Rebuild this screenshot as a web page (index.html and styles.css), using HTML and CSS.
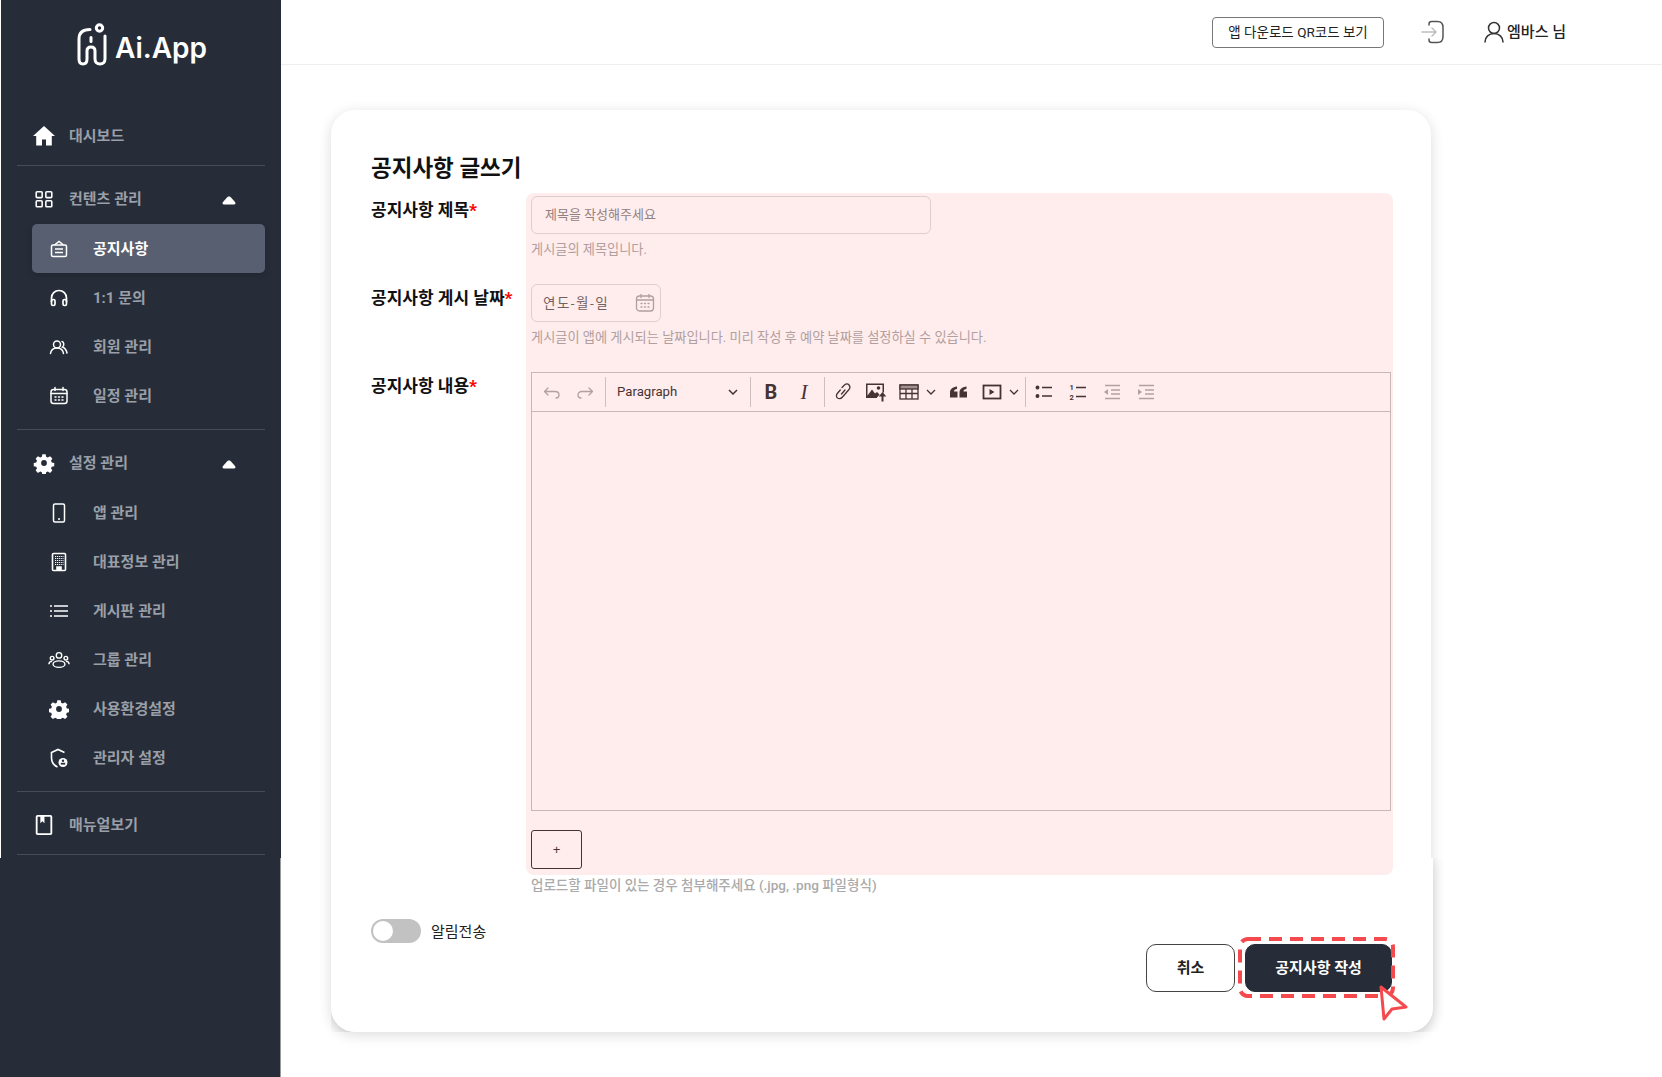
FILE: index.html
```html
<!DOCTYPE html>
<html lang="ko">
<head>
    <meta charset="UTF-8">
    <title>공지사항 글쓰기</title>
    <link rel="stylesheet" href="styles.css">
</head>
<body>
    <aside class="sidebar">
        <div class="sidebar-inner">
            <div class="logo">
                <svg width="30" height="44" viewBox="0 0 30 44" fill="none" stroke="#fff" stroke-width="3" stroke-linecap="round" stroke-linejoin="round">
                    <circle cx="22.500" cy="5" r="3.200"/>
                    <path d="M13 6.500C5 6.500 2 10 2 16V36C2 39 3.500 41 6 41S10 39 10 36V28C10 25 11.500 24 14 24S18 25 18 28V36C18 39 20 41 23 41S28 39 28 36V13"/>
                    <path d="M14 14.500V18.500"/>
                </svg>
                <span class="logo-text">Ai.App</span>
            </div>

            <a class="menu-top">
                <svg class="icon-top" viewBox="1 1.500 22 22" fill="#fff"><path d="M12 2.500 1 12.500h3.200V22h5.800v-6h4v6h5.800v-9.500H23z"/></svg>
                대시보드
            </a>
            <div class="line"></div>

            <a class="menu-top menu-group">
                <svg class="icon-top" viewBox="0 0 24 24" fill="none" stroke="#fff" stroke-width="1.700"><rect x="3.500" y="4" width="6.500" height="6.500" rx="1"/><rect x="14" y="4" width="6.500" height="6.500" rx="1"/><rect x="3.500" y="14" width="6.500" height="6.500" rx="1"/><rect x="14" y="14" width="6.500" height="6.500" rx="1"/></svg>
                컨텐츠 관리
                <svg class="caret" width="14" height="9" viewBox="0 0 14 9" fill="#fff"><path d="M7 .5C6 .5 5.500 1 5 1.600L1 6C0 7.200.6 8.500 2 8.500H12C13.400 8.500 14 7.200 13 6L9 1.600C8.500 1 8 .5 7 .5z"/></svg>
            </a>
            <a class="menu-sub active">
                <svg class="icon-sub" viewBox="0 0 20 20" fill="none" stroke="#fff" stroke-width="1.500"><rect x="2.500" y="6" width="15" height="11.500" rx="1.500"/><path d="M5.500 6 10 2.500 14.500 6M6 10h8M6 13.500h8"/></svg>
                공지사항
            </a>
            <a class="menu-sub">
                <svg class="icon-sub" viewBox="0 0 20 20" fill="none" stroke="#fff" stroke-width="1.700"><path d="M2.500 14V10a7.500 7.500 0 0 1 15 0v4"/><rect x="2.500" y="11.500" width="3.500" height="6" rx="1.500"/><rect x="14" y="11.500" width="3.500" height="6" rx="1.500"/></svg>
                1:1 문의
            </a>
            <a class="menu-sub">
                <svg class="icon-sub" viewBox="0 0 20 20" fill="none" stroke="#fff" stroke-width="1.500" stroke-linecap="round"><circle cx="8" cy="7.500" r="3.500"/><path d="M1.500 16.500c.5-3.500 3-5.500 6.500-5.500s6 2 6.500 5.500M13 4.500c2 .5 2.500 4 .5 5.500 2.500 1 4 3.500 4.500 6"/></svg>
                회원 관리
            </a>
            <a class="menu-sub">
                <svg class="icon-sub" viewBox="0 0 20 20" fill="none" stroke="#fff" stroke-width="1.500" stroke-linecap="round"><rect x="2" y="3.500" width="16" height="14" rx="2.500"/><path d="M2 7.500h16M6 1.500v3M14 1.500v3M6 11h1M9.500 11h1M13 11h1M6 14h1M9.500 14h1M13 14h1"/></svg>
                일정 관리
            </a>
            <div class="line line-group"></div>

            <a class="menu-top menu-group">
                <svg class="icon-top" viewBox="0 0 24 24" fill="#fff"><path fill-rule="evenodd" d="M10 1.500h4l.6 3 2 .9 2.700-1.600 2.800 2.800-1.600 2.700.9 2 3 .6v4l-3 .6-.9 2 1.600 2.700-2.800 2.800-2.700-1.600-2 .9-.6 3h-4l-.6-3-2-.9-2.700 1.600-2.800-2.800 1.600-2.700-.9-2-3-.6v-4l3-.6.9-2L1.900 6.600 4.700 3.800l2.700 1.600 2-.9zM12 8.500a3.500 3.500 0 1 0 0 7 3.500 3.500 0 0 0 0-7z" transform="translate(1.200 1.200) scale(.9)"/></svg>
                설정 관리
                <svg class="caret" width="14" height="9" viewBox="0 0 14 9" fill="#fff"><path d="M7 .5C6 .5 5.500 1 5 1.600L1 6C0 7.200.6 8.500 2 8.500H12C13.400 8.500 14 7.200 13 6L9 1.600C8.500 1 8 .5 7 .5z"/></svg>
            </a>
            <a class="menu-sub">
                <svg class="icon-sub" viewBox="0 0 20 20" fill="none" stroke="#fff" stroke-width="1.500"><rect x="4.500" y="1" width="11" height="18" rx="1.500"/><path d="M9 16h2"/></svg>
                앱 관리
            </a>
            <a class="menu-sub">
                <svg class="icon-sub" viewBox="0 0 20 20" fill="none" stroke="#fff" stroke-width="1.600"><rect x="3.500" y="1.500" width="13" height="17" rx="1"/><path stroke-dasharray="1.100 .8" stroke-width="1.100" d="M6 4.500h8.500M6 6.500h8.500M6 8.500h8.500M6 10.500h8.500M6 12.500h8.500"/><path fill="#fff" d="M8 18.500v-3.500h4v3.500"/></svg>
                대표정보 관리
            </a>
            <a class="menu-sub">
                <svg class="icon-sub" viewBox="0 0 20 20" fill="none" stroke="#fff" stroke-width="1.500"><path d="M5 5h14M5 10h14M5 15h14M1 5h2M1 10h2M1 15h2"/></svg>
                게시판 관리
            </a>
            <a class="menu-sub">
                <svg class="icon-sub icon-wide" viewBox="0 0 24 20" fill="none" stroke="#fff" stroke-width="1.500"><circle cx="12" cy="5" r="3"/><circle cx="4.500" cy="8" r="2"/><circle cx="19.500" cy="8" r="2"/><path d="M1 14.500c0-2 2-3 3.500-3M23 14.500c0-2-2-3-3.500-3"/><ellipse cx="12" cy="14.500" rx="6.500" ry="3.500"/></svg>
                그룹 관리
            </a>
            <a class="menu-sub">
                <svg class="icon-sub" viewBox="0 0 24 24" fill="#fff"><path fill-rule="evenodd" d="M10 1.500h4l.6 3 2 .9 2.700-1.600 2.800 2.800-1.600 2.700.9 2 3 .6v4l-3 .6-.9 2 1.600 2.700-2.800 2.800-2.700-1.600-2 .9-.6 3h-4l-.6-3-2-.9-2.700 1.600-2.800-2.800 1.600-2.700-.9-2-3-.6v-4l3-.6.9-2L1.900 6.600 4.700 3.800l2.700 1.600 2-.9zM12 8.500a3.500 3.500 0 1 0 0 7 3.500 3.500 0 0 0 0-7z"/></svg>
                사용환경설정
            </a>
            <a class="menu-sub">
                <svg class="icon-sub" viewBox="0 0 20 20" fill="none" stroke="#fff" stroke-width="1.600"><path d="M15.500 4.500 9 1.500 2.500 4.500V10c0 4 2.500 7.500 6 9"/><circle cx="14" cy="14.500" r="4.500" fill="#fff" stroke="none"/><circle cx="14" cy="12.800" r="1.200" fill="#262d38" stroke="none"/><rect x="11.800" y="14.800" width="4.400" height="1.800" fill="#262d38" stroke="none"/></svg>
                관리자 설정
            </a>
            <div class="line line-group"></div>

            <a class="menu-top">
                <svg class="icon-top" viewBox="0 0 24 24" fill="none" stroke="#fff" stroke-width="2"><rect x="4" y="2" width="16" height="20" rx="1"/><path fill="#fff" stroke="none" d="M8 2h4.500v8L10.200 8 8 10z"/></svg>
                매뉴얼보기
            </a>
            <div class="line line-last"></div>
        </div>
        <div class="sidebar-rest"></div>
    </aside>

    <div class="main">
        <header class="topbar">
            <button class="qr-btn">앱 다운로드 QR코드 보기</button>
            <svg class="logout" width="24" height="24" viewBox="0 0 24 24" fill="none" stroke-width="1.500" stroke-linecap="round" stroke-linejoin="round"><path stroke="#bdbdbd" d="M1 12h14M11 8l4 4-4 4"/><path stroke="#555" d="M8 5V4c0-1.500 1-2.500 2.500-2.500h6C20 1.500 22 4 22 7.500v9c0 3.500-2 6-5.500 6h-6C9 22.500 8 21.500 8 20v-1"/></svg>
            <div class="user">
                <svg width="20" height="22" viewBox="0 0 20 22" fill="none" stroke="#333" stroke-width="1.500" stroke-linecap="round"><circle cx="10" cy="7" r="5.500"/><path d="M1 21c0-5 4-8.500 9-8.500s9 3.500 9 8.500"/></svg>
                <span>엠바스 님</span>
            </div>
        </header>

        <section class="card">
            <h1 class="title">공지사항 글쓰기</h1>

            <div class="form-row">
                <label class="label">공지사항 제목<b>*</b></label>
                <div class="field">
                    <div class="input input-title">제목을 작성해주세요</div>
                    <p class="help">게시글의 제목입니다.</p>
                </div>
            </div>

            <div class="form-row">
                <label class="label">공지사항 게시 날짜<b>*</b></label>
                <div class="field">
                    <div class="input input-date">
                        연도-월-일
                        <svg width="20" height="20" viewBox="0 0 20 20" fill="none" stroke="#aaa" stroke-width="1.300" stroke-linecap="round"><rect x="1.500" y="3" width="17" height="15" rx="3"/><path d="M1.500 7h17M6 1.500v3M14 1.500v3M6 10.500h1M9.500 10.500h1M13 10.500h1M6 14h1M9.500 14h1M13 14h1"/></svg>
                    </div>
                    <p class="help">게시글이 앱에 게시되는 날짜입니다. 미리 작성 후 예약 날짜를 설정하실 수 있습니다.</p>
                </div>
            </div>

            <div class="form-row">
                <label class="label">공지사항 내용<b>*</b></label>
                <div class="field field-auto">
                    <div class="editor">
                        <div class="toolbar">
                            <svg class="tool tool-off" viewBox="0 0 20 20" fill="none" stroke="#333" stroke-width="1.300" stroke-linecap="round" stroke-linejoin="round"><path d="M6 6 2.500 9.500 6 13M3 9.500h10c2.500 0 4 1.500 4 3.500s-1.500 3-3 3"/></svg>
                            <svg class="tool tool-off" viewBox="0 0 20 20" fill="none" stroke="#333" stroke-width="1.300" stroke-linecap="round" stroke-linejoin="round"><path d="M14 6l3.500 3.500L14 13M17 9.500H7c-2.500 0-4 1.500-4 3.500s1.500 3 3 3"/></svg>
                            <i class="sep"></i>
                            <div class="select"><span class="select-text">Paragraph</span>
                                <svg width="10" height="6" viewBox="0 0 10 6" fill="none" stroke="#333" stroke-width="1.500"><path d="M1 1l4 4 4-4"/></svg>
                            </div>
                            <i class="sep"></i>
                            <span class="tool tool-b">B</span>
                            <span class="tool tool-i">I</span>
                            <i class="sep"></i>
                            <svg class="tool tool-link" viewBox="0 0 20 20" fill="none" stroke="#333" stroke-width="1.300" stroke-linecap="round"><path d="M9 5.500l2.500-2.500c1.500-1.200 3.500-1.200 4.500 0s1.200 3 0 4.500l-6.500 7.500c-1.500 1.700-3.500 2-5 1-1.200-1-1.500-3-.2-4.500l3-3.500M12 8l-3.500 4"/></svg>
                            <svg class="tool tool-wide tool-img" viewBox="0 0 22 20" fill="#333"><path fill-rule="evenodd" d="M1 1.500h18v9h-1.500V3h-15v10.500H12V16H1z"/><path d="M2.500 15v-1.500L7 7.500l3 4 2-1.500 2.500 2.500-2 2.500z"/><circle cx="13.500" cy="6" r="1.800"/><path d="M17.500 10l3.800 4.500h-2.800V19.500h-2v-5h-2.800z"/></svg>
                            <svg class="tool tool-wide" viewBox="0 0 20 20" fill="none" stroke="#333" stroke-width="1.300"><rect x="1" y="3" width="18" height="14"/><rect x="1" y="3" width="18" height="4" fill="#999"/><path d="M1 11.500h18M7 7v10M13 7v10"/></svg>
                            <svg class="chev" width="10" height="6" viewBox="0 0 10 6" fill="none" stroke="#333" stroke-width="1.300"><path d="M1 1l4 4 4-4"/></svg>
                            <svg class="tool" viewBox="0 0 20 20" fill="#333"><path d="M2 15.500V10.500C2 7 4.500 5 9 4.500V7C7 7.300 6 8.200 6 9.500H9.500V15.500zM11.500 15.500V10.500C11.500 7 14 5 18.500 4.500V7C16.500 7.300 15.500 8.200 15.500 9.500H19V15.500z"/></svg>
                            <svg class="tool tool-wide" viewBox="0 0 20 20" fill="none" stroke="#333" stroke-width="1.800"><rect x="1.500" y="3.500" width="17" height="13"/><path fill="#333" stroke="none" d="M7.500 7v6l5-3z"/></svg>
                            <svg class="chev" width="10" height="6" viewBox="0 0 10 6" fill="none" stroke="#333" stroke-width="1.300"><path d="M1 1l4 4 4-4"/></svg>
                            <i class="sep sep-last"></i>
                            <svg class="tool list-tool list-first" viewBox="0 0 20 20" fill="none" stroke="#333" stroke-width="1.300"><circle cx="3.500" cy="5.500" r="1.300" fill="#333"/><circle cx="3.500" cy="14" r="1.300" fill="#333"/><path d="M8 5.500h10M8 14h10"/></svg>
                            <svg class="tool list-tool" viewBox="0 0 20 20" fill="none" stroke="#333" stroke-width="1.300"><text x="1.500" y="8" font-size="7.500" font-weight="700" fill="#333" stroke="none">1</text><text x="1.500" y="18" font-size="7.500" font-weight="700" fill="#333" stroke="none">2</text><path d="M8 5.500h10M8 14.500h10"/></svg>
                            <svg class="tool list-tool tool-off" viewBox="0 0 20 20" fill="none" stroke="#333" stroke-width="1.300"><path d="M3 3.500h15M9 8h9M9 12h9M3 16.500h15"/><path fill="#333" stroke="none" d="M6 7v6l-4-3z"/></svg>
                            <svg class="tool list-tool tool-off" viewBox="0 0 20 20" fill="none" stroke="#333" stroke-width="1.300"><path d="M3 3.500h15M9 8h9M9 12h9M3 16.500h15"/><path fill="#333" stroke="none" d="M2 7v6l4-3z"/></svg>
                        </div>
                        <div class="editor-body"></div>
                    </div>
                    <button class="plus-btn">+</button>
                    <p class="help help-upload">업로드할 파일이 있는 경우 첨부해주세요 (.jpg, .png 파일형식)</p>
                </div>
            </div>

            <div class="notify">
                <span class="switch"><i></i></span>
                <span class="notify-text">알림전송</span>
            </div>

            <div class="actions">
                <button class="btn">취소</button>
                <button class="btn btn-dark">공지사항 작성</button>
            </div>

            <div class="highlight"></div>
            <svg class="dash" width="158" height="61" viewBox="0 0 158 61" fill="none" stroke="#f44a4e" stroke-width="4"><rect x="2" y="2" width="153" height="57" rx="8" stroke-dasharray="13 8"/></svg>
            <svg class="pointer" width="36" height="42" viewBox="0 0 36 42" fill="#fff" stroke="#f44a4e" stroke-width="3" stroke-linejoin="round"><path d="M5 5 30 25 16 27 8 37z"/></svg>
        </section>
    </div>
</body>
</html>
```

FILE: styles.css
```css
*{
    box-sizing: border-box;
}

html,body{
    margin: 0;
    padding: 0;
    height: 100%;
}

body{
    display: flex;
    font-family: Roboto, "Noto Sans CJK KR", sans-serif;
    background-color: #fff;
    overflow: hidden;
    color: #222;
}

p,h1{
    margin: 0;
}

/* sidebar */
.sidebar{
    display: flex;
    flex-direction: column;
    width: 281px;
    flex-shrink: 0;
    background-color: #262d38;
}

.sidebar-inner{
    height: 858px;
    border-left: 1px solid #fff;
    padding: 22px 16px 0;
}

.sidebar-rest{
    flex: 1;
    border-right: 1px solid #9a9a9a;
}

.logo{
    display: flex;
    align-items: center;
    gap: 8px;
    height: 46px;
    padding-left: 60px;
    margin-bottom: 43px;
}

.logo-text{
    font-family: Inter, sans-serif;
    font-weight: 600;
    font-size: 28px;
    padding-top: 6px;
    color: #fff;
}

.menu-top{
    display: flex;
    align-items: center;
    height: 49px;
    padding: 0 0 2px 16px;
    color: #9a9fa8;
    font-size: 15px;
    font-weight: 700;
}

.icon-top{
    width: 22px;
    height: 22px;
    margin-top: 2px;
    margin-right: 14px;
}

.menu-group{
    margin-bottom: 1px;
}

.caret{
    margin-left: auto;
    margin-right: 29px;
    margin-top: 6px;
}

.menu-sub{
    display: flex;
    align-items: center;
    height: 49px;
    margin-left: 15px;
    padding: 0 0 2px 17px;
    color: #9a9fa8;
    font-size: 15px;
    font-weight: 700;
}

.menu-sub.active{
    color: #fff;
    background-color: #585f71;
    border-radius: 5px;
    box-shadow: 0 2px 6px rgba(0,0,0,.15);
}

.icon-sub{
    width: 20px;
    height: 20px;
    margin-top: 2px;
    margin-right: 24px;
    flex-shrink: 0;
}

.icon-wide{
    width: 22px;
    height: 22px;
    margin-left: -1px;
    margin-right: 23px;
}

.line{
    height: 1px;
    margin: 5px 0 8px;
    background-color: #464c58;
}

.line-group{
    margin-top: 9px;
}

.line-last{
    margin-bottom: 0;
}

/* top */
.main{
    flex: 1;
    min-width: 0;
}

.topbar{
    display: flex;
    align-items: center;
    justify-content: flex-end;
    height: 65px;
    padding-right: 96px;
    border-bottom: 1px solid #eee;
}

.qr-btn{
    width: 172px;
    height: 31px;
    background-color: #fff;
    border: 1px solid #777;
    border-radius: 4px;
    font-family: inherit;
    font-size: 13.500px;
    color: #222;
    padding: 0 0 2px;
}

.logout{
    margin-left: 37px;
    margin-right: 39px;
}

.user{
    display: flex;
    align-items: center;
    gap: 3px;
    font-size: 15px;
    font-weight: 500;
    color: #222;
}

.user span{
    padding-bottom: 4px;
}

/* card */
.card{
    position: relative;
    z-index: 0;
    width: 1100px;
    height: 922px;
    margin: 45px 0 0 50px;
    padding: 46px 40px 0;
    background-color: #fff;
    border-radius: 24px;
    box-shadow: 0 3px 14px rgba(0,0,0,.14);
}

/* lower part of the card sits 2px wider */
.card::before{
    content: "";
    position: absolute;
    z-index: -1;
    left: 0;
    top: 748px;
    width: 1102px;
    bottom: 0;
    background-color: #fff;
    border-radius: 0 0 24px 24px;
    box-shadow: 0 3px 14px rgba(0,0,0,.14);
    clip-path: inset(0 -20px 0 0);
}

.title{
    font-size: 22.500px;
    font-weight: 700;
    line-height: 24px;
    color: #111;
    margin-bottom: 16px;
}

.form-row{
    display: flex;
}

.label{
    width: 160px;
    flex-shrink: 0;
    padding-top: 2px;
    font-size: 17px;
    font-weight: 700;
    line-height: 24px;
    color: #111;
}

.label b{
    color: #f00;
}

.field{
    flex: 1;
    height: 88px;
}

.field-auto{
    height: auto;
}

.input{
    display: flex;
    align-items: center;
    height: 38px;
    border: 1px solid #ddd;
    border-radius: 6px;
    font-size: 13px;
    color: #888;
}

.input-title{
    width: 400px;
    padding: 0 0 3px 13px;
}

.input-date{
    justify-content: space-between;
    width: 130px;
    padding: 0 5px 0 11px;
    font-size: 13.500px;
    letter-spacing: 1.500px;
    line-height: 17px;
    color: #666;
}

.help{
    margin-top: 6px;
    font-size: 13.200px;
    line-height: 19px;
    color: #aaa;
}

.help-upload{
    margin-top: 7px;
    font-size: 13.500px;
    font-weight: 500;
}

/* editor */
.editor{
    width: 860px;
    border: 1px solid #c4c4c4;
}

.toolbar{
    display: flex;
    align-items: center;
    height: 39px;
    padding-left: 10px;
    border-bottom: 1px solid #c4c4c4;
}

.tool{
    width: 20px;
    height: 20px;
    margin-right: 13px;
    flex-shrink: 0;
}

.tool-wide{
    width: 22px;
    margin-right: 3px;
}

.tool-off{
    opacity: .4;
}

.tool-link{
    margin-left: -2px;
    margin-right: 12px;
}

.tool-img{
    margin-right: 11px;
}

.tool-b{
    font-size: 20px;
    font-weight: 700;
    text-align: center;
    line-height: 20px;
    color: #333;
}

.tool-i{
    font-family: "Liberation Serif", serif;
    font-style: italic;
    font-size: 21px;
    text-align: center;
    line-height: 20px;
    color: #333;
}

.chev{
    margin-left: 3px;
    margin-right: 12px;
}

.sep{
    width: 1px;
    height: 30px;
    background-color: #ccc;
    margin-right: 10px;
    margin-left: -3px;
}

.sep-last{
    margin-left: -6px;
}

.list-tool{
    margin-right: 14px;
}

.list-first{
    margin-left: -2px;
}

.select{
    display: flex;
    align-items: center;
    justify-content: space-between;
    width: 122px;
    padding-left: 1px;
    margin-right: 15px;
    font-size: 13.200px;
    color: #333;
}

.select-text{
    padding-bottom: 2px;
}

.editor-body{
    height: 398px;
}

.plus-btn{
    display: block;
    width: 51px;
    height: 39px;
    margin-top: 19px;
    background-color: #fff;
    border: 1px solid #333;
    border-radius: 3px;
    font-size: 13px;
    color: #333;
    padding: 0;
}

/* bottom */
.notify{
    display: flex;
    align-items: center;
    gap: 10px;
    margin-top: 24px;
    font-size: 15px;
    color: #222;
}

.notify-text{
    padding-bottom: 2px;
}

.switch{
    display: block;
    width: 50px;
    height: 24px;
    padding: 2px;
    background-color: #c2c2c2;
    border-radius: 12px;
}

.switch i{
    display: block;
    width: 20px;
    height: 20px;
    background-color: #fff;
    border-radius: 50%;
}

.actions{
    display: flex;
    justify-content: flex-end;
    gap: 10px;
    margin-top: 1px;
    margin-right: -1px;
}

.btn{
    width: 89px;
    height: 48px;
    background-color: #fff;
    border: 1px solid #444;
    border-radius: 10px;
    font-family: inherit;
    font-size: 15px;
    font-weight: 700;
    color: #222;
    padding: 0 0 3px;
}

.btn-dark{
    width: 147px;
    background-color: #262d38;
    border-color: #262d38;
    color: #fff;
}

/* overlays */
.highlight{
    position: absolute;
    left: 195px;
    top: 83px;
    width: 867px;
    height: 682px;
    background-color: rgba(255,60,60,.09);
    border-radius: 8px;
    pointer-events: none;
}

.dash{
    position: absolute;
    left: 907px;
    top: 827px;
}

.pointer{
    position: absolute;
    left: 1045px;
    top: 872px;
}
```
